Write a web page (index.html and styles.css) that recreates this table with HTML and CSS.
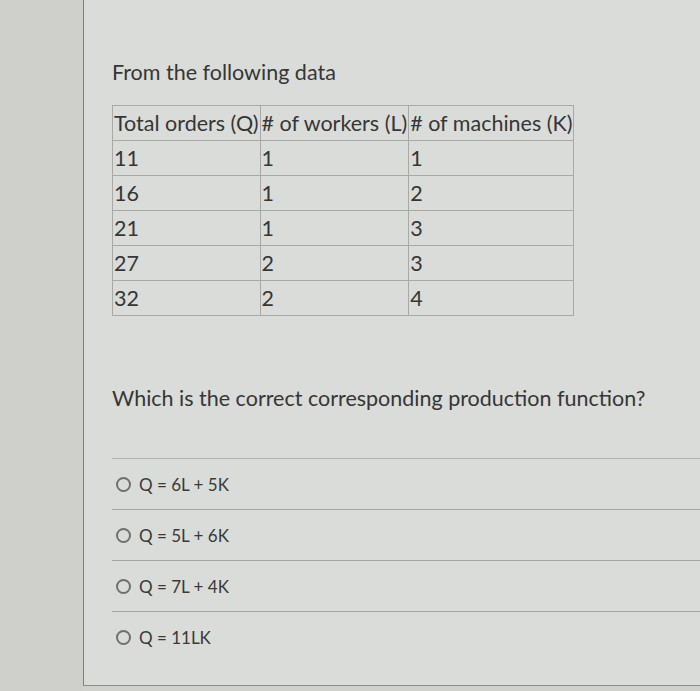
FILE: index.html
```html
<!DOCTYPE html>
<html>
<head>
<meta charset="utf-8">
<link rel="stylesheet" href="styles.css">
</head>
<body>
<div class="page">
  <div class="side"></div>
  <div class="panel">
    <p class="intro">From the following data</p>
    <table class="data">
      <tr><td class="c1">Total orders (Q)</td><td class="c2"># of workers (L)</td><td class="c3"># of machines (K)</td></tr>
      <tr><td>11</td><td>1</td><td>1</td></tr>
      <tr><td>16</td><td>1</td><td>2</td></tr>
      <tr><td>21</td><td>1</td><td>3</td></tr>
      <tr><td>27</td><td>2</td><td>3</td></tr>
      <tr><td>32</td><td>2</td><td>4</td></tr>
    </table>
    <p class="question">Which is the correct corresponding production function?</p>
    <ul class="options">
      <li class="option"><span class="radio"></span><span class="label">Q = 6L + 5K</span></li>
      <li class="option"><span class="radio"></span><span class="label">Q = 5L + 6K</span></li>
      <li class="option"><span class="radio"></span><span class="label">Q = 7L + 4K</span></li>
      <li class="option"><span class="radio"></span><span class="label">Q = 11LK</span></li>
    </ul>
  </div>
</div>
</body>
</html>
```

FILE: styles.css
```css
html, body {
  margin: 0;
  padding: 0;
  background: #d0d1cd;
}
body {
  font-family: Lato, "Liberation Sans", sans-serif;
  color: #363636;
}
.page {
  display: flex;
  width: 700px;
  height: 691px;
  overflow: hidden;
}
.side {
  width: 83px;
  flex: none;
  background: #cfd0cc;
}
.panel {
  flex: 1;
  height: 686px;
  box-sizing: border-box;
  border-left: 1px solid #7f807c;
  border-bottom: 1px solid #8c8d89;
  background: #d9dcd8;
  padding: 59px 0 0 28px;
}
.intro {
  margin: 0;
  font-size: 21.5px;
  line-height: 26px;
}
.data {
  margin-top: 20px;
  border-collapse: collapse;
  border: 1px solid #9c9d99;
  font-size: 21.5px;
  line-height: 24px;
}
.data td {
  border: 1px solid #a9aaa6;
  height: 34px;
  padding: 0 1px;
  vertical-align: middle;
  white-space: nowrap;
}
.question {
  margin: 69px 0 0 0;
  font-size: 21.5px;
  line-height: 26px;
}
.options {
  list-style: none;
  margin: 47px 0 0 0;
  padding: 0;
}
.option {
  display: flex;
  align-items: center;
  height: 50px;
  border-top: 1px solid #a4a6a2;
  font-size: 17px;
}
.option:first-child { border-top-color: #b0b2ae; }
.radio {
  width: 11px;
  height: 11px;
  border: 2px solid #707070;
  border-radius: 50%;
  margin: 0 8px 0 4px;
  flex: none;
}
.label {
  color: #3a3a3a;
}
```
